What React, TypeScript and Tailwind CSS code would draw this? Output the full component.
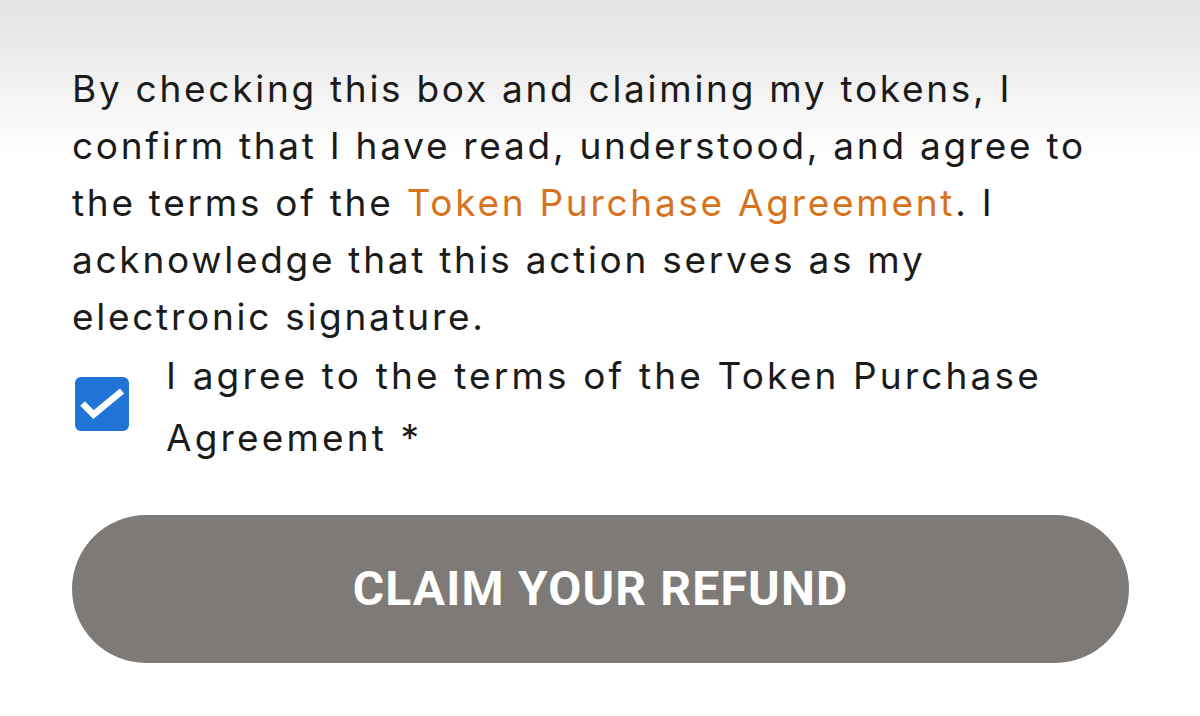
import { useState } from 'react'

export default function App() {
  const [agreed, setAgreed] = useState(true)

  return (
    <div className="min-h-[716px] w-[1200px] bg-gradient-to-b from-[#e2e2e2] via-white via-[22%] to-white font-['Inter','Liberation_Sans',sans-serif]">
      <div className="px-[72px] pt-[60px]">
        <p className="text-[37px] leading-[57px] tracking-[2.72px] text-[#1b1b1b]">
          By checking this box and claiming my tokens, I<br />
          confirm that I have read, understood, and agree to<br />
          the terms of the <a className="text-[#d8731d]">Token Purchase Agreement</a>. I<br />
          acknowledge that this action serves as my<br />
          electronic signature.
        </p>

        <label className="flex items-start gap-[37px] cursor-pointer">
          <button
            type="button"
            onClick={() => setAgreed(!agreed)}
            className={`ml-[3px] mt-[32px] flex h-[54px] w-[54px] shrink-0 items-center justify-center rounded-[6px] ${agreed ? 'bg-[#1f74d6]' : 'border-2 border-gray-400 bg-white'}`}
          >
            {agreed && (
              <svg width="54" height="54" viewBox="0 0 54 54" fill="none">
                <path d="M7.5 26.5l11 11L47 14" stroke="white" strokeWidth="6.5" />
              </svg>
            )}
          </button>
          <span className="text-[37px] leading-[62px] tracking-[3.15px] text-[#1b1b1b]">
            I agree to the terms of the Token Purchase<br />
            Agreement *
          </span>
        </label>

        <button
          type="button"
          className="mt-[46px] h-[148px] w-[1057px] rounded-full bg-[#7d7a78] font-['Roboto',sans-serif] text-[48px] font-bold tracking-[1.2px] text-white"
        >
          CLAIM YOUR REFUND
        </button>
      </div>
    </div>
  )
}
